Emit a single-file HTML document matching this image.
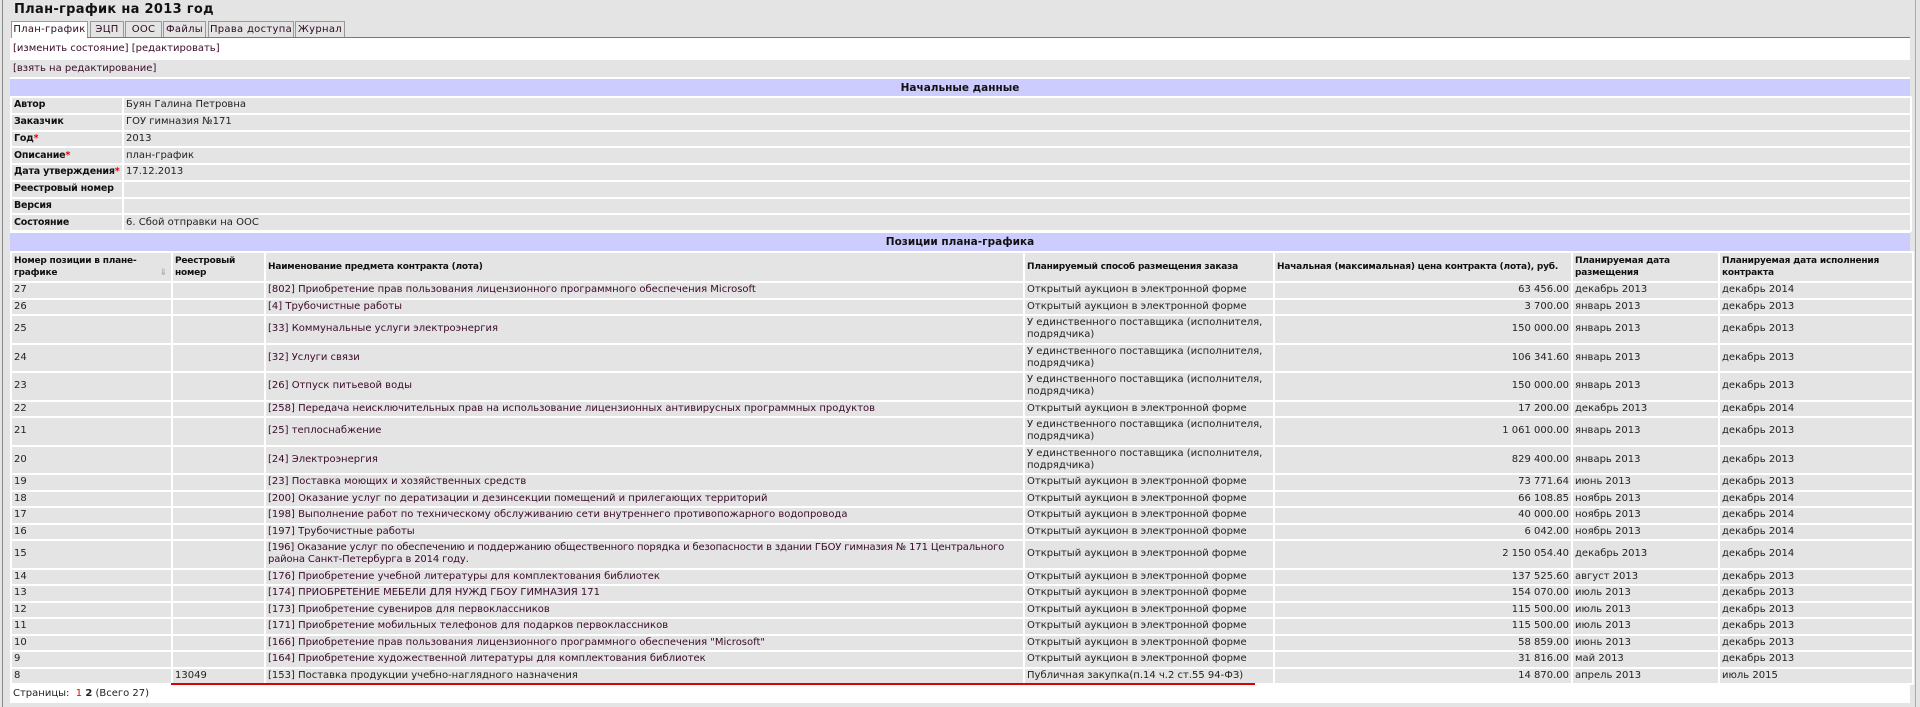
<!DOCTYPE html>
<html><head><meta charset="utf-8">
<style>
html,body{margin:0;padding:0}
body{width:1920px;height:707px;background:#e4e4e4;position:relative;overflow:hidden;font-family:"DejaVu Sans","Liberation Sans",sans-serif;font-size:10px;color:#222}
.vl{position:absolute;left:2px;top:0;width:1px;height:707px;background:#888}
.vr{position:absolute;left:1915px;top:0;width:1px;height:707px;background:#aaa}
h1{position:absolute;left:14px;top:2px;margin:0;font-size:13px;font-weight:bold;color:#111;letter-spacing:0.3px}
.tabs{position:absolute;left:11px;top:21px;height:16px}
.tab{position:absolute;top:0;height:15px;border:1px solid #999;border-bottom:none;background:#e4e4e4;font-size:10px;line-height:15px;text-align:center;color:#2a0a20;letter-spacing:0.3px}
.tab.a{background:#fff;height:16px}
.tline{position:absolute;left:10px;top:37px;width:1900px;height:1px;background:#777}
.panel{position:absolute;left:10px;top:38px;width:1900px;height:665px;background:#fff}
.r1{position:absolute;left:10px;top:38px;width:1900px;height:21px;line-height:22px;background:#fff;color:#3a0a2a;text-indent:3px}
.r2{position:absolute;left:10px;top:60px;width:1900px;height:17px;line-height:17px;background:#e4e4e4;color:#3a0a2a;text-indent:3px}
.blue{position:absolute;left:10px;width:1900px;height:18px;background:#ccccff;font-weight:bold;font-size:10.5px;text-align:center;line-height:18px;color:#111}
table{position:absolute;border-collapse:collapse;table-layout:fixed;left:10px}
td{border:2px solid #fff;background:#e4e4e4;padding:0 0 0 2px;vertical-align:middle;overflow:hidden;white-space:nowrap;line-height:12px}
.d td{height:16.75px;padding-top:0;padding-bottom:0;box-sizing:border-box}
.d td.l{font-weight:bold;color:#111;font-size:9.5px;letter-spacing:-0.2px}
.st{color:#e00}
.p td{box-sizing:border-box}
.p tr.s td{height:16.5px}
.p tr.w td{height:28.5px;white-space:normal}
.p tr.h td{height:30px;font-weight:bold;white-space:normal;font-size:9px;letter-spacing:-0.2px;color:#111}
.n{text-align:right;padding-right:2px!important}
a{color:#3a0a2a;text-decoration:none}
.red{position:absolute;left:171px;top:683px;width:1084px;height:2px;background:#d00}
.pg{position:absolute;left:13px;top:687px;font-size:10px;line-height:13px}
</style></head><body>
<div class="vl"></div><div class="vr"></div>
<h1>План-график на 2013 год</h1>
<div class="panel"></div>
<div class="tabs">
<div class="tab a" style="left:0;width:75px">План-график</div>
<div class="tab" style="left:79px;width:32px">ЭЦП</div>
<div class="tab" style="left:114px;width:35px">ООС</div>
<div class="tab" style="left:152px;width:41px">Файлы</div>
<div class="tab" style="left:197px;width:84px">Права доступа</div>
<div class="tab" style="left:284px;width:48px">Журнал</div>
</div>
<div class="tline" style="left:87px;width:1823px"></div>
<div class="r1">[изменить состояние] [редактировать]</div>
<div class="r2">[взять на редактирование]</div>
<div class="blue" style="top:79px">Начальные данные</div>
<table class="d" style="top:96px;width:1902px">
<colgroup><col style="width:112px"><col></colgroup>
<tr><td class="l">Автор</td><td>Буян Галина Петровна</td></tr>
<tr><td class="l">Заказчик</td><td>ГОУ гимназия №171</td></tr>
<tr><td class="l">Год<span class="st">*</span></td><td>2013</td></tr>
<tr><td class="l">Описание<span class="st">*</span></td><td>план-график</td></tr>
<tr><td class="l">Дата утверждения<span class="st">*</span></td><td>17.12.2013</td></tr>
<tr><td class="l">Реестровый номер</td><td></td></tr>
<tr><td class="l">Версия</td><td></td></tr>
<tr><td class="l">Состояние</td><td>6. Сбой отправки на ООС</td></tr>
</table>
<div class="blue" style="top:233px">Позиции плана-графика</div>
<table class="p" style="top:251px;width:1902px">
<colgroup><col style="width:161px"><col style="width:93px"><col style="width:759px"><col style="width:250px"><col style="width:298px"><col style="width:147px"><col style="width:194px"></colgroup>
<tr class="h"><td>Номер позиции в плане-графике <span style="color:#aaa;float:right;margin-right:4px">⇓</span></td><td>Реестровый номер</td><td>Наименование предмета контракта (лота)</td><td>Планируемый способ размещения заказа</td><td style="white-space:nowrap">Начальная (максимальная) цена контракта (лота), руб.</td><td>Планируемая дата размещения</td><td>Планируемая дата исполнения контракта</td></tr>
<tr class="s"><td>27</td><td></td><td><a>[802] Приобретение прав пользования лицензионного программного обеспечения Microsoft</a></td><td>Открытый аукцион в электронной форме</td><td class="n">63 456.00</td><td>декабрь 2013</td><td>декабрь 2014</td></tr>
<tr class="s"><td>26</td><td></td><td><a>[4] Трубочистные работы</a></td><td>Открытый аукцион в электронной форме</td><td class="n">3 700.00</td><td>январь 2013</td><td>декабрь 2013</td></tr>
<tr class="w"><td>25</td><td></td><td><a>[33] Коммунальные услуги электроэнергия</a></td><td>У единственного поставщика (исполнителя, подрядчика)</td><td class="n">150 000.00</td><td>январь 2013</td><td>декабрь 2013</td></tr>
<tr class="w"><td>24</td><td></td><td><a>[32] Услуги связи</a></td><td>У единственного поставщика (исполнителя, подрядчика)</td><td class="n">106 341.60</td><td>январь 2013</td><td>декабрь 2013</td></tr>
<tr class="w"><td>23</td><td></td><td><a>[26] Отпуск питьевой воды</a></td><td>У единственного поставщика (исполнителя, подрядчика)</td><td class="n">150 000.00</td><td>январь 2013</td><td>декабрь 2013</td></tr>
<tr class="s"><td>22</td><td></td><td><a>[258] Передача неисключительных прав на использование лицензионных антивирусных программных продуктов</a></td><td>Открытый аукцион в электронной форме</td><td class="n">17 200.00</td><td>декабрь 2013</td><td>декабрь 2014</td></tr>
<tr class="w"><td>21</td><td></td><td><a>[25] теплоснабжение</a></td><td>У единственного поставщика (исполнителя, подрядчика)</td><td class="n">1 061 000.00</td><td>январь 2013</td><td>декабрь 2013</td></tr>
<tr class="w"><td>20</td><td></td><td><a>[24] Электроэнергия</a></td><td>У единственного поставщика (исполнителя, подрядчика)</td><td class="n">829 400.00</td><td>январь 2013</td><td>декабрь 2013</td></tr>
<tr class="s"><td>19</td><td></td><td><a>[23] Поставка моющих и хозяйственных средств</a></td><td>Открытый аукцион в электронной форме</td><td class="n">73 771.64</td><td>июнь 2013</td><td>декабрь 2013</td></tr>
<tr class="s"><td>18</td><td></td><td><a>[200] Оказание услуг по дератизации и дезинсекции помещений и прилегающих территорий</a></td><td>Открытый аукцион в электронной форме</td><td class="n">66 108.85</td><td>ноябрь 2013</td><td>декабрь 2014</td></tr>
<tr class="s"><td>17</td><td></td><td><a>[198] Выполнение работ по техническому обслуживанию сети внутреннего противопожарного водопровода</a></td><td>Открытый аукцион в электронной форме</td><td class="n">40 000.00</td><td>ноябрь 2013</td><td>декабрь 2014</td></tr>
<tr class="s"><td>16</td><td></td><td><a>[197] Трубочистные работы</a></td><td>Открытый аукцион в электронной форме</td><td class="n">6 042.00</td><td>ноябрь 2013</td><td>декабрь 2014</td></tr>
<tr class="w"><td>15</td><td></td><td><a style="letter-spacing:-0.15px">[196] Оказание услуг по обеспечению и поддержанию общественного порядка и безопасности в здании ГБОУ гимназия № 171 Центрального района Санкт-Петербурга в 2014 году.</a></td><td>Открытый аукцион в электронной форме</td><td class="n">2 150 054.40</td><td>декабрь 2013</td><td>декабрь 2014</td></tr>
<tr class="s"><td>14</td><td></td><td><a>[176] Приобретение учебной литературы для комплектования библиотек</a></td><td>Открытый аукцион в электронной форме</td><td class="n">137 525.60</td><td>август 2013</td><td>декабрь 2013</td></tr>
<tr class="s"><td>13</td><td></td><td><a>[174] ПРИОБРЕТЕНИЕ МЕБЕЛИ ДЛЯ НУЖД ГБОУ ГИМНАЗИЯ 171</a></td><td>Открытый аукцион в электронной форме</td><td class="n">154 070.00</td><td>июль 2013</td><td>декабрь 2013</td></tr>
<tr class="s"><td>12</td><td></td><td><a>[173] Приобретение сувениров для первоклассников</a></td><td>Открытый аукцион в электронной форме</td><td class="n">115 500.00</td><td>июль 2013</td><td>декабрь 2013</td></tr>
<tr class="s"><td>11</td><td></td><td><a>[171] Приобретение мобильных телефонов для подарков первоклассников</a></td><td>Открытый аукцион в электронной форме</td><td class="n">115 500.00</td><td>июль 2013</td><td>декабрь 2013</td></tr>
<tr class="s"><td>10</td><td></td><td><a>[166] Приобретение прав пользования лицензионного программного обеспечения "Microsoft"</a></td><td>Открытый аукцион в электронной форме</td><td class="n">58 859.00</td><td>июнь 2013</td><td>декабрь 2013</td></tr>
<tr class="s"><td>9</td><td></td><td><a>[164] Приобретение художественной литературы для комплектования библиотек</a></td><td>Открытый аукцион в электронной форме</td><td class="n">31 816.00</td><td>май 2013</td><td>декабрь 2013</td></tr>
<tr class="s"><td>8</td><td>13049</td><td>[153] Поставка продукции учебно-наглядного назначения</td><td>Публичная закупка(п.14 ч.2 ст.55 94-ФЗ)</td><td class="n">14 870.00</td><td>апрель 2013</td><td>июль 2015</td></tr>
</table>
<div class="red"></div>
<div class="pg">Страницы: &nbsp;<span style="color:#e00">1</span> <b>2</b> (Всего 27)</div>
</body></html>
